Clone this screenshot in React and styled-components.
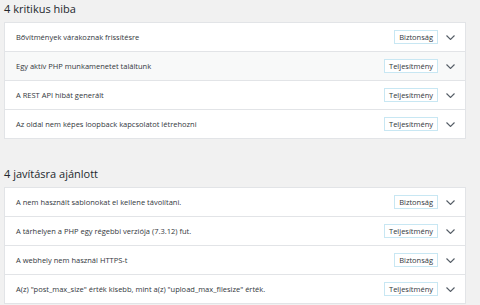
import React from "react";
import styled, { createGlobalStyle } from "styled-components";

const GlobalStyle = createGlobalStyle`
  body {
    margin: 0;
    background: #f1f1f1;
    font-family: "Open Sans", "Noto Sans", sans-serif;
    color: #23282d;
  }
`;

const critical = [
  { text: "Bővítmények várakoznak frissítésre", badge: "Biztonság" },
  { text: "Egy aktív PHP munkamenetet találtunk", badge: "Teljesítmény", hover: true },
  { text: "A REST API hibát generált", badge: "Teljesítmény" },
  { text: "Az oldal nem képes loopback kapcsolatot létrehozni", badge: "Teljesítmény" },
];

const recommended = [
  { text: "A nem használt sablonokat el kellene távolítani.", badge: "Biztonság" },
  { text: "A tárhelyen a PHP egy régebbi verziója (7.3.12) fut.", badge: "Teljesítmény" },
  { text: "A webhely nem használ HTTPS-t", badge: "Biztonság" },
  { text: 'A(z) "post_max_size" érték kisebb, mint a(z) "upload_max_filesize" érték.', badge: "Teljesítmény" },
];

const Chevron = () => (
  <svg width="9" height="5" viewBox="0 0 9 5">
    <path d="M0.5 0.5 L4.5 4.5 L8.5 0.5" fill="none" stroke="#555d66" strokeWidth="1.1" />
  </svg>
);

const Section = ({ title, items, first }) => (
  <SectionWrap $first={first}>
    <Heading>{title}</Heading>
    <Panel>
      {items.map((item) => (
        <Row key={item.text} $hover={item.hover}>
          <Label>{item.text}</Label>
          <Badge>{item.badge}</Badge>
          <Toggle>
            <Chevron />
          </Toggle>
        </Row>
      ))}
    </Panel>
  </SectionWrap>
);

const App = () => {
  return (
    <>
      <GlobalStyle />
      <Page>
        <Section title="4 kritikus hiba" items={critical} first />
        <Section title="4 javításra ajánlott" items={recommended} />
      </Page>
    </>
  );
};

export default App;

const Page = styled.div`
  padding: 0 14px 0 4px;
`;

const SectionWrap = styled.section`
  margin-top: ${(props) => (props.$first ? "0" : "26px")};
`;

const Heading = styled.h2`
  margin: 0 0 5px 0;
  font-size: 11px;
  font-weight: 400;
  line-height: 17px;
  color: #23282d;
`;

const Panel = styled.div`
  background: #fff;
  border: 1px solid #e2e4e7;
  border-bottom: none;
`;

const Row = styled.div`
  display: flex;
  align-items: center;
  height: 28px;
  padding: 0 10px 0 11px;
  border-bottom: 1px solid #e2e4e7;
  background: ${(props) => (props.$hover ? "#f8f9f9" : "#fff")};
`;

const Label = styled.span`
  flex: 1;
  font-size: 7.5px;
  color: #32373c;
`;

const Badge = styled.span`
  padding: 1px 4px;
  border: 1px solid #c8e7f3;
  background: #fff;
  font-size: 7.5px;
  font-weight: 500;
  color: #32373c;
  line-height: 10px;
`;

const Toggle = styled.span`
  display: flex;
  align-items: center;
  justify-content: center;
  width: 9px;
  margin-left: 8px;
`;
